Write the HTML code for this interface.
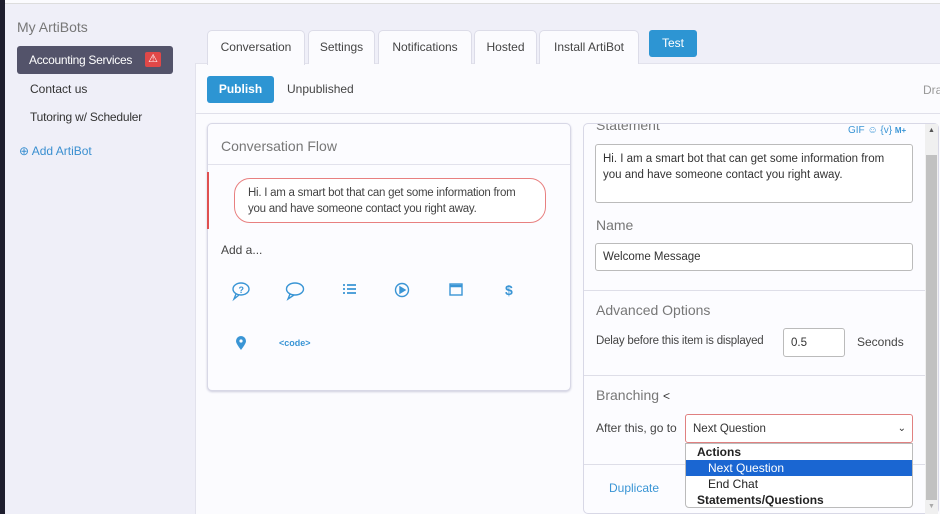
<!DOCTYPE html>
<html><head><style>
*{box-sizing:border-box;margin:0;padding:0}
body{width:940px;height:514px;overflow:hidden;background:#efeff8;font-family:"Liberation Sans",sans-serif;color:#333;position:relative;font-size:12px}
.a{position:absolute}
.tab{position:absolute;top:30px;height:34px;background:#fbfbfe;border:1px solid #dcdce8;border-bottom:none;border-radius:5px 5px 0 0;font-size:12px;color:#444;text-align:center;line-height:32px}
.sep{position:absolute;left:584px;width:341px;height:1px;background:#dedee8}
.lbl{position:absolute;font-size:14px;color:#777}
.inp{position:absolute;background:#fff;border:1px solid #bbb;border-radius:3px;font-size:11.5px;color:#333;padding:0 7px}
</style></head><body>
<div class="a" style="left:0;top:0;width:940px;height:4px;background:#fbfbfe;border-bottom:1px solid #ddd"></div>
<div class="a" style="left:0;top:0;width:5px;height:514px;background:#1e1e2e"></div>
<div class="a" style="left:17px;top:19px;font-size:14px;color:#777">My ArtiBots</div>
<div class="a" style="left:17px;top:46px;width:156px;height:28px;background:#53536a;border-radius:3px;color:#fff;font-size:12px;padding:7px 12px;letter-spacing:-0.3px">Accounting Services
<span class="a" style="left:128px;top:6px;width:16px;height:15px;background:#e04848;border-radius:2px;color:#fff;font-size:11px;line-height:15px;text-align:center;letter-spacing:0">⚠</span></div>
<div class="a" style="left:30px;top:82px;font-size:12px;color:#333">Contact us</div>
<div class="a" style="left:30px;top:110px;font-size:12px;color:#333;letter-spacing:-0.2px">Tutoring w/ Scheduler</div>
<div class="a" style="left:19px;top:144px;font-size:12px;color:#3a8fd0">⊕ Add ArtiBot</div>

<div class="a" style="left:195px;top:63px;width:745px;height:451px;background:#fbfbfe;border-left:1px solid #e2e2ec;border-top:1px solid #e2e2ec"></div>
<div class="tab" style="left:207px;width:98px;height:35px">Conversation</div>
<div class="tab" style="left:308px;width:67px">Settings</div>
<div class="tab" style="left:378px;width:94px">Notifications</div>
<div class="tab" style="left:474px;width:63px">Hosted</div>
<div class="tab" style="left:539px;width:100px">Install ArtiBot</div>
<div class="a" style="left:649px;top:30px;width:48px;height:27px;background:#2d95d3;border-radius:3px;color:#fff;font-size:12px;text-align:center;line-height:27px">Test</div>
<div class="a" style="left:207px;top:76px;width:67px;height:27px;background:#2d95d3;border-radius:3px;color:#fff;font-size:12px;font-weight:bold;text-align:center;line-height:27px">Publish</div>
<div class="a" style="left:287px;top:82px;font-size:12px;color:#444">Unpublished</div>
<div class="a" style="left:923px;top:83px;font-size:12px;color:#999">Dra</div>
<div class="a" style="left:196px;top:113px;width:744px;height:1px;background:#e0e0ea"></div>

<div class="a" style="left:207px;top:123px;width:364px;height:268px;background:#fcfcff;border:1px solid #d8d8e6;border-radius:5px;box-shadow:0 1px 2px #ccd"></div>
<div class="a" style="left:221px;top:138px;font-size:14px;color:#777">Conversation Flow</div>
<div class="a" style="left:208px;top:164px;width:362px;height:1px;background:#e2e2ec"></div>
<div class="a" style="left:207px;top:172px;width:2px;height:57px;background:#e05050"></div>
<div class="a" style="left:234px;top:178px;width:312px;height:45px;border:1px solid #e88080;border-radius:16px;background:#fff;font-size:11.5px;color:#444;padding:6px 13px;line-height:16px;letter-spacing:-0.25px">Hi. I am a smart bot that can get some information from you and have someone contact you right away.</div>
<div class="a" style="left:221px;top:243px;font-size:12px;color:#444">Add a...</div>
<svg class="a" style="left:228px;top:280px" width="300" height="75" fill="none" stroke="#3a95d5" stroke-width="1.4">
<ellipse cx="13" cy="9" rx="8" ry="6"/><path d="M8 14 L6 19 L11 15"/><text x="10.5" y="13" font-size="9" font-weight="bold" fill="#3a95d5" stroke="none" font-family="Liberation Sans">?</text>
<ellipse cx="67" cy="9" rx="8.5" ry="6"/><path d="M62 14 L60 19 L66 15"/>
<path d="M115 5h2M115 9h2M115 13h2M119 5h9M119 9h9M119 13h9" stroke-width="1.8"/>
<circle cx="174" cy="10" r="6.5"/><path d="M172 7 L177 10 L172 13Z" fill="#3a95d5"/>
<rect x="222" y="4" width="12" height="11"/><path d="M222 6h12" stroke-width="2.5"/>
<text x="277" y="15" font-size="14" font-weight="bold" fill="#3a95d5" stroke="none" font-family="Liberation Sans">$</text>
<path d="M13 70c-3-4-5-7-5-9a5 5 0 0 1 10 0c0 2-2 5-5 9z" fill="#3a95d5" stroke="none"/><circle cx="13" cy="61" r="1.6" fill="#fff" stroke="none"/>
<text x="51" y="66" font-size="9" font-weight="bold" fill="#3a95d5" stroke="none" font-family="Liberation Sans">&lt;code&gt;</text>
</svg>

<div class="a" style="left:583px;top:123px;width:356px;height:391px;background:#fcfcff;border:1px solid #d8d8e6;border-radius:5px;overflow:hidden">
<div class="a" style="left:12px;top:-7px;font-size:14px;color:#777">Statement</div>
<div class="a" style="left:264px;top:1px;font-size:10px;color:#3a95d5">GIF ☺ {v} <b style="font-size:8px">M+</b></div>
</div>
<div class="a" style="left:925px;top:124px;width:13px;height:390px;background:#f0f0f0"></div>
<div class="a" style="left:926px;top:155px;width:11px;height:345px;background:#c1c1c1"></div>
<div class="a" style="left:928px;top:127px;font-size:7px;color:#555">▲</div>
<div class="a" style="left:928px;top:503px;font-size:7px;color:#aaa">▼</div>
<div class="inp" style="left:595px;top:144px;width:318px;height:59px;line-height:16px;padding:6px 7px">Hi. I am a smart bot that can get some information from you and have someone contact you right away.</div>
<div class="lbl" style="left:596px;top:217px">Name</div>
<div class="inp" style="left:595px;top:243px;width:318px;height:28px;line-height:27px">Welcome Message</div>
<div class="sep" style="top:290px"></div>
<div class="lbl" style="left:596px;top:302px">Advanced Options</div>
<div class="a" style="left:596px;top:335px;font-size:11.5px;color:#444;letter-spacing:-0.2px">Delay before this item is displayed</div>
<div class="inp" style="left:783px;top:328px;width:62px;height:29px;line-height:28px">0.5</div>
<div class="a" style="left:857px;top:335px;font-size:12px;color:#444">Seconds</div>
<div class="sep" style="top:375px"></div>
<div class="lbl" style="left:596px;top:387px">Branching <span style="color:#333;font-size:12px">&lt;</span></div>
<div class="a" style="left:596px;top:421px;font-size:12px;color:#444">After this, go to</div>
<div class="inp" style="left:685px;top:414px;width:228px;height:29px;line-height:28px;border-color:#e08080">Next Question<span style="position:absolute;right:6px;top:0;font-size:10px">⌄</span></div>
<div class="sep" style="top:464px"></div>
<div class="a" style="left:609px;top:481px;font-size:12px;color:#3a95d5">Duplicate</div>
<div class="a" style="left:685px;top:443px;width:228px;height:65px;background:#fff;border:1px solid #bbb;border-radius:0 0 4px 4px;font-size:12px;color:#222;line-height:16px">
<div style="padding-left:11px;font-weight:bold">Actions</div>
<div style="padding-left:22px;background:#1a66d2;color:#fff">Next Question</div>
<div style="padding-left:22px">End Chat</div>
<div style="padding-left:11px;font-weight:bold">Statements/Questions</div>
</div>
</body></html>
